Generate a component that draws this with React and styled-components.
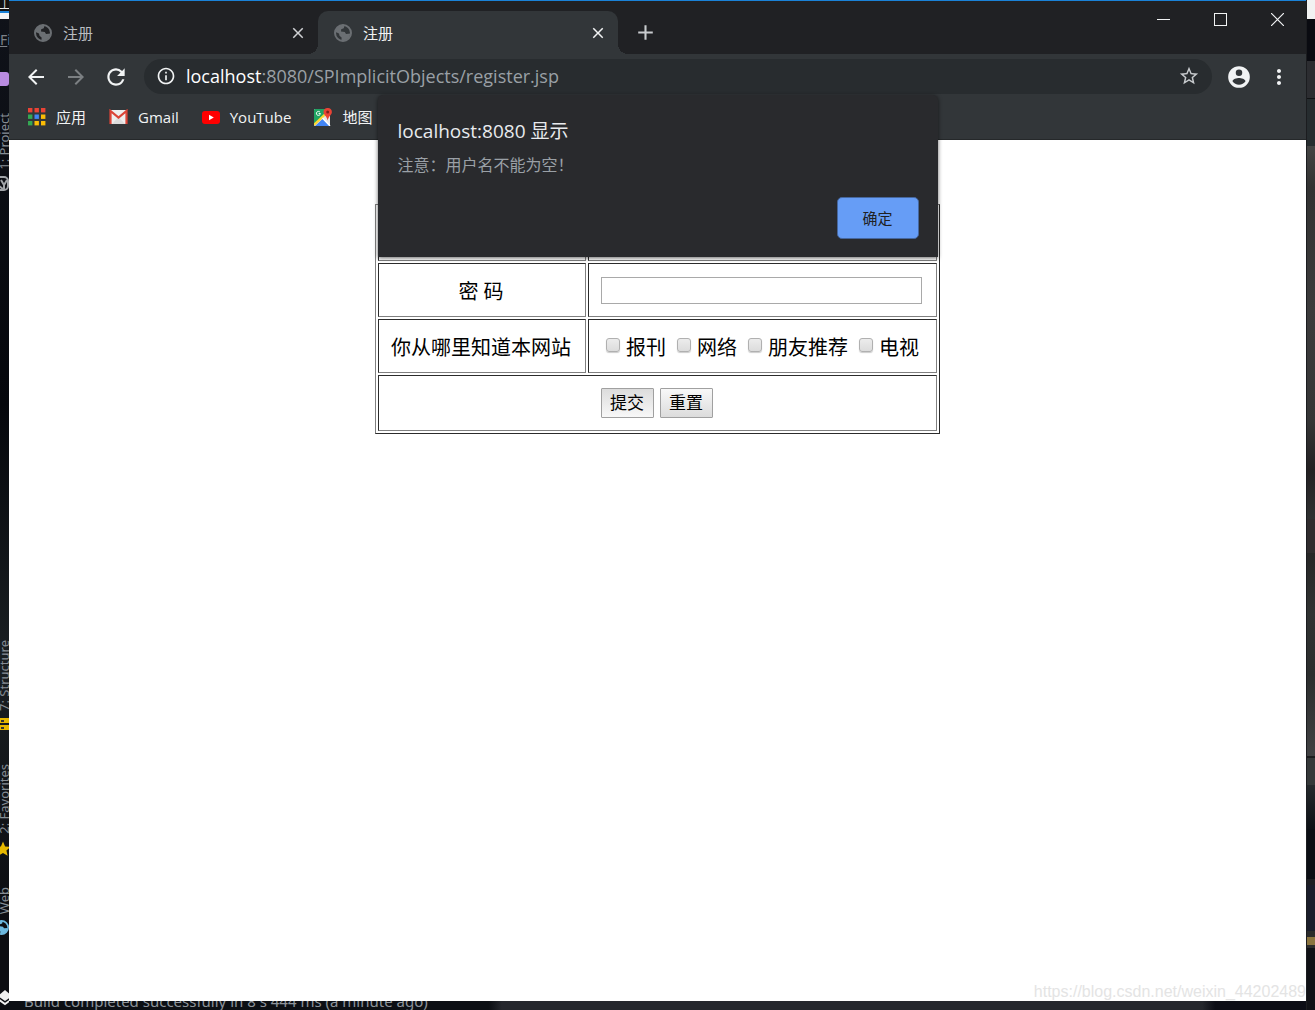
import React from "react";
import styled, { createGlobalStyle } from "styled-components";
import {
  MdAdd,
  MdArrowBack,
  MdArrowForward,
  MdClose,
  MdInfoOutline,
  MdMoreVert,
  MdRefresh,
  MdStar,
  MdStarBorder,
} from "react-icons/md";

const GlobalStyle = createGlobalStyle`
  * {
    box-sizing: border-box;
  }

  body {
    margin: 0;
    background: #0c0e13;
    font-family: "Open Sans", "Noto Sans CJK SC", sans-serif;
  }

  button,
  input {
    font-family: inherit;
  }
`;

const Desktop = styled.div`
  position: relative;
  display: grid;
  grid-template-columns: 9px minmax(0, 1fr) 9px;
  grid-template-rows: minmax(0, 1fr) 9px;
  height: 100vh;
  overflow: hidden;
`;

/* editor window behind the browser */

const Rail = styled.aside`
  grid-row: 1 / 3;
  display: flex;
  flex-direction: column;
  overflow: hidden;
  background: linear-gradient(#10131a, #05070c 40%, #1a1f22 65%, #0c0d12 90%);
  font-family: "Noto Sans", sans-serif;
`;

const RailTop = styled.div`
  flex: none;
  height: 19px;
  background: linear-gradient(
    #111 8px,
    #eee 8px,
    #eee 9px,
    #111 9px,
    #111 11px,
    #1a82d8 11px,
    #1a82d8 13px,
    #f4f4f4 13px
  );
  color: #ddd;
  font-size: 10px;
  line-height: 6px;
  text-align: center;
`;

const RailMenu = styled.div`
  flex: none;
  height: 42px;
  padding-top: 10px;
  color: #7d8288;
  font-size: 14px;
  line-height: 22px;
  white-space: nowrap;

  &::first-letter {
    text-decoration: underline;
  }
`;

const RailFolder = styled.div`
  flex: none;
  height: 14px;
  margin: 11px 0 27px;
  border-radius: 0 3px 3px 0;
  background: #b98be0;
`;

const RailTool = styled.div`
  flex: none;
  display: flex;
  flex-direction: column;
  gap: 6px;
  margin-bottom: ${(props) => props.$after || 0}px;
  color: ${(props) => props.$color};

  span {
    align-self: flex-start;
    writing-mode: vertical-rl;
    transform: rotate(180deg);
    color: #868d95;
    font-size: 13px;
    line-height: 9px;
    white-space: nowrap;
  }

  svg {
    flex: none;
    display: block;
    margin-left: -6px;
  }
`;

const Spacer = styled.div`
  flex: 1;
`;

const RightEdge = styled.aside`
  grid-column: 3;
  grid-row: 1 / 3;
  display: flex;
  flex-direction: column;
  border-left: 1px solid #1b1c1f;
`;

const EdgePart = styled.div`
  flex: ${(props) => props.$size} 0 0;
  background: ${(props) => props.$fill};
`;

const StatusBar = styled.footer`
  grid-column: 2;
  grid-row: 2;
  display: flex;
  align-items: flex-end;
  height: 9px;
  padding: 0 0 2px 15px;
  overflow: hidden;
  background: linear-gradient(
    90deg,
    #0c0f14 37%,
    #25272d 38%,
    #25272d 92%,
    #0c0d15 93%
  );
  color: #8e949b;
  font-family: "Noto Sans", sans-serif;
  font-size: 15px;
  line-height: 14px;
  white-space: nowrap;
`;

/* browser window */

const Browser = styled.div`
  position: relative;
  grid-column: 2;
  grid-row: 1;
  display: flex;
  flex-direction: column;
  border-top: 1px solid #1a82d8;
  background: #fff;
`;

const TitleBar = styled.header`
  display: flex;
  height: 53px;
  padding: 10px 0 0 9px;
  background: #202124;
`;

const Tab = styled.div`
  position: relative;
  display: flex;
  align-items: center;
  width: 300px;
  height: 43px;
  padding: 0 12px 0 16px;
  border-radius: 10px 10px 0 0;
  background: ${(props) => (props.$active ? "#323639" : "transparent")};
  color: ${(props) => (props.$active ? "#f1f3f4" : "#b9bdc1")};
  font-size: 15px;

  &::before,
  &::after {
    content: "";
    display: ${(props) => (props.$active ? "block" : "none")};
    position: absolute;
    bottom: 0;
    width: 10px;
    height: 10px;
  }

  &::before {
    right: 100%;
    background: radial-gradient(circle at 0 0, #202124 10px, #323639 10px);
  }

  &::after {
    left: 100%;
    background: radial-gradient(circle at 100% 0, #202124 10px, #323639 10px);
  }
`;

const TabTitle = styled.span`
  flex: 1;
  padding-left: 11px;
`;

const IconButton = styled.button`
  display: flex;
  align-items: center;
  justify-content: center;
  width: ${(props) => props.$width || 16}px;
  height: ${(props) => props.$height || 16}px;
  padding: 0;
  border: 0;
  background: none;
  color: ${(props) => props.$color || "#f1f3f4"};

  svg {
    flex: none;
  }
`;

const WindowControls = styled.div`
  display: flex;
  margin: -10px 0 0 auto;
`;

const Toolbar = styled.div`
  display: flex;
  align-items: center;
  height: 45px;
  padding: 0 6px 0 7px;
  background: #323639;
`;

const Omnibox = styled.div`
  flex: 1;
  display: flex;
  align-items: center;
  gap: 10px;
  height: 35px;
  margin: 0 8px;
  padding: 0 15px 1px 12px;
  border-radius: 18px;
  background: #282c2f;
  color: #9aa0a6;
  font-size: 18px;
`;

const Address = styled.span`
  flex: 1;

  b {
    color: #fff;
    font-weight: 400;
  }
`;

const Bookmarks = styled.nav`
  display: flex;
  align-items: center;
  gap: 23px;
  height: 41px;
  padding: 0 19px 4px;
  border-bottom: 1px solid #25282a;
  background: #323639;
`;

const Bookmark = styled.a`
  display: flex;
  align-items: center;
  gap: 10px;
  color: #f1f3f4;
  font-size: 15px;
  line-height: 20px;
  text-decoration: none;
`;

const Page = styled.main`
  flex: 1;
  padding-top: 64px;
`;

const FormTable = styled.table`
  margin: 0 auto;
  border: 1px solid;
  border-color: #808080 #2c2c2c #2c2c2c #808080;
  border-spacing: 2px;
  color: #000;
  font-size: 20px;
  line-height: 24px;
`;

const Cell = styled.td`
  height: 54px;
  padding: 12px 14px 12px 12px;
  border: 1px solid;
  border-color: #2c2c2c #808080 #808080 #2c2c2c;
`;

const LabelCell = styled(Cell)`
  padding-top: 16px;
  text-align: center;
`;

const TextInput = styled.input`
  display: block;
  width: 321px;
  height: 27px;
  padding: 1px 4px;
  border: 1px solid #a9a9a9;
  background: #fff;
  font-size: 17px;
`;

const CheckRow = styled.div`
  display: flex;
  gap: 11px;
  padding: 4px 0 0 5px;
`;

const Check = styled.label`
  display: flex;
  align-items: center;
  gap: 6px;

  input {
    appearance: none;
    width: 14px;
    height: 14px;
    margin: 0 0 6px;
    border: 1px solid #b0b0b0;
    border-radius: 3px;
    background: linear-gradient(#ececec, #dcdcdc);
    box-shadow: 0 1px 1px #ccc;
  }
`;

const FormActions = styled.div`
  display: flex;
  justify-content: center;
  gap: 6px;
`;

const FormButton = styled.button`
  width: 53px;
  height: 30px;
  padding: 0;
  border: 1px solid #a0a0a0;
  border-radius: 1px;
  background: ${(props) =>
    props.$pressed
      ? "linear-gradient(#dcdcdc, #f8f8f8)"
      : "linear-gradient(#f8f8f8, #dcdcdc)"};
  color: #000;
  font-size: 17px;
  line-height: 24px;
`;

const Dialog = styled.div`
  position: absolute;
  top: 94px;
  left: 50%;
  display: flex;
  flex-direction: column;
  width: 560px;
  padding: 22px 19px 18px 20px;
  border-radius: 5px 5px 0 0;
  background: #292a2d;
  box-shadow: 0 1px 4px rgba(0, 0, 0, 0.6);
  transform: translateX(-50%);

  h1 {
    margin: 0;
    color: #e8eaed;
    font-size: 19px;
    font-weight: 400;
    line-height: 28px;
  }

  p {
    margin: 8px 0 20px;
    color: #9aa0a6;
    font-size: 16px;
    line-height: 24px;
  }
`;

const ConfirmButton = styled.button`
  align-self: flex-end;
  width: 82px;
  height: 42px;
  padding: 0 0 2px;
  border: 1px solid #46679e;
  border-radius: 5px;
  background: #669df6;
  color: #202124;
  font-size: 15px;
`;

const Watermark = styled.div`
  position: absolute;
  right: 9px;
  bottom: 9px;
  color: #e4e4e4;
  font-family: "Liberation Sans", sans-serif;
  font-size: 16px;
  line-height: 18px;
`;

const Globe = ({ size = 18, color = "#6b6f73" }) => (
  <svg width={size} height={size} viewBox="0 0 18 18">
    <circle cx="9" cy="9" r="8" fill="none" stroke={color} strokeWidth="2" />
    <path
      d="M2 5.5 5.5 1.5 10.5 1 9.8 4.2 7.2 5.2 7 7.5 10.8 8 12 10 16.5 9.5 15 14 10 17 7.5 16.5 7.6 13.4 5.5 11.8 5 9.5 1.5 8Z"
      fill={color}
    />
  </svg>
);

const ProfileIcon = () => (
  <svg width="26" height="26" viewBox="0 0 24 24">
    <path
      d="M12 2a10 10 0 1 0 0 20 10 10 0 0 0 0-20Zm0 3a3 3 0 1 1 0 6 3 3 0 0 1 0-6Zm0 14.2a7.200 7.200 0 0 1-6-3.220c.03-1.990 4-3.080 6-3.080s5.970 1.090 6 3.080a7.200 7.200 0 0 1-6 3.220Z"
      fill="currentColor"
    />
  </svg>
);

const APP_COLORS = [
  ["#ea4335", "#ea4335", "#ea4335"],
  ["#34a853", "#4285f4", "#fbbc05"],
  ["#34a853", "#fbbc05", "#fbbc05"],
];

const AppsIcon = () => (
  <svg width="18" height="18" viewBox="0 0 18 18">
    {APP_COLORS.map((row, y) =>
      row.map((fill, x) => (
        <rect key={`${x}${y}`} x={x * 6.5} y={y * 6.5} width="4.4" height="4.4" fill={fill} />
      ))
    )}
  </svg>
);

const GmailIcon = () => (
  <svg width="19" height="16" viewBox="0 0 19 16">
    <rect x="1" y="1" width="17" height="14" rx="1.5" fill="#eee" />
    <path d="M3 15 9.5 8 16 15Z" fill="#dcdcdc" />
    <path d="M1.500 15V2L9.500 8.500 17.500 2V15" fill="none" stroke="#db4437" strokeWidth="2.2" />
  </svg>
);

const YoutubeIcon = () => (
  <svg width="18" height="13" viewBox="0 0 18 13">
    <rect width="18" height="13" rx="3" fill="#f00" />
    <path d="M7 3.8v5.4l4.8-2.7z" fill="#fff" />
  </svg>
);

const MapsIcon = () => (
  <svg width="18" height="18" viewBox="0 0 18 18">
    <rect y="1" width="16" height="17" rx="1" fill="#e8e8e8" />
    <path d="M0 2a1 1 0 0 1 1-1h10v6L0 17Z" fill="#1fa463" />
    <path d="M1 18 8.500 11l7 7Z" fill="#4285f4" />
    <path d="M0 17 11 6.5" stroke="#fdd835" strokeWidth="2.4" />
    <path d="m8.5 10 7.5 8" stroke="#fff" strokeWidth="1.2" />
    <path d="M6 4.2a2 2 0 1 0 .4 1.4H4.6" fill="none" stroke="#fff" />
    <path d="M13.7 0a4 4 0 0 0-4.200 4c0 3 3.300 4 4.200 8.500.8-4.500 4.200-5.500 4.200-8.500a4 4 0 0 0-4.200-4Z" fill="#ea4335" />
    <circle cx="13.7" cy="4" r="1.5" fill="#7b231e" />
  </svg>
);

const LINKS = [
  { name: "应用", Icon: AppsIcon },
  { name: "Gmail", Icon: GmailIcon },
  { name: "YouTube", Icon: YoutubeIcon },
  { name: "地图", Icon: MapsIcon },
];

const SOURCES = ["报刊", "网络", "朋友推荐", "电视"];

const EDGE = [
  [19, "#f2f2f2"],
  [42, "#0a0b11"],
  [37, "#2c2d31"],
  [1, "#111315"],
  [47, "#262c2f"],
  [274, "linear-gradient(#444, #323232 15%, #3c3b3c 60%, #353536)"],
  [99, "linear-gradient(#353536, #232022 50%, #2f3031)"],
  [34, "#302c2e"],
  [203, "linear-gradient(#262626, #303232 30%, #2b2d2d 60%, #414143)"],
  [2, "#1b1c1d"],
  [27, "#353839"],
  [44, "linear-gradient(#25292c, #0c1015)"],
  [50, "#0b0e14"],
  [6, "#1d1e22"],
  [46, "#1a1d2b"],
  [6, "#2b2b2b"],
  [8, "#8b743f"],
  [3, "#2b2b2b"],
  [62, "#101116"],
];

export default function App() {
  return (
    <Desktop>
      <GlobalStyle />

      <Rail>
        <RailTop>J</RailTop>
        <RailMenu>Fi</RailMenu>
        <RailFolder />
        <RailTool $color="#a0a4a8">
          <span>1: Project</span>
          <svg width="15" height="15" viewBox="0 0 15 15">
            <rect x="1" y="1" width="13" height="13" rx="4" fill="none" stroke="currentColor" strokeWidth="2" />
            <path d="m7 4 3 5 3-5M10 9v4M5 10l4 3" fill="none" stroke="currentColor" strokeWidth="2" />
          </svg>
        </RailTool>
        <Spacer />
        <RailTool $color="#e6b800" $after={33}>
          <span>7: Structure</span>
          <svg width="15" height="14" viewBox="0 0 15 14">
            <path d="M0 1h15v5H0zM0 8h15v5H0z" fill="currentColor" />
            <path d="M7 3h3v2H7zM7 10h3v2H7z" fill="#333" />
          </svg>
        </RailTool>
        <RailTool $color="#e6b800" $after={29}>
          <span>2: Favorites</span>
          <MdStar size={18} />
        </RailTool>
        <RailTool $color="#6cb8df" $after={55}>
          <span>Web</span>
          <Globe size={15} color="#6cb8df" />
        </RailTool>
        <RailTool $color="#f0f0f0" $after={4}>
          <svg width="20" height="16" viewBox="0 0 20 16">
            <path d="m11 0 7 6-7 5-7-5Z" fill="currentColor" />
            <path d="m4 9 7 5 7-5" fill="none" stroke="currentColor" strokeWidth="2" />
          </svg>
        </RailTool>
      </Rail>

      <Browser>
        <TitleBar>
          <Tab>
            <Globe />
            <TabTitle>注册</TabTitle>
            <IconButton $color="#d0d2d5" aria-label="关闭标签页">
              <MdClose size={18} />
            </IconButton>
          </Tab>
          <Tab $active>
            <Globe />
            <TabTitle>注册</TabTitle>
            <IconButton aria-label="关闭标签页">
              <MdClose size={18} />
            </IconButton>
          </Tab>
          <IconButton $width={54} $height={43} $color="#c8cbce" aria-label="新标签页">
            <MdAdd size={25} />
          </IconButton>
          <WindowControls>
            <IconButton $width={57} $height={37} aria-label="最小化">
              <svg width="13" height="13" viewBox="0 0 13 13">
                <path d="M0 6.5h13" stroke="currentColor" />
              </svg>
            </IconButton>
            <IconButton $width={57} $height={37} aria-label="最大化">
              <svg width="13" height="13" viewBox="0 0 13 13">
                <rect x=".5" y=".5" width="12" height="12" fill="none" stroke="currentColor" />
              </svg>
            </IconButton>
            <IconButton $width={57} $height={37} aria-label="关闭">
              <svg width="13" height="13" viewBox="0 0 13 13">
                <path d="m0 0 13 13M13 0 0 13" stroke="currentColor" strokeWidth="1.2" />
              </svg>
            </IconButton>
          </WindowControls>
        </TitleBar>

        <Toolbar>
          <IconButton $width={40} $height={36} aria-label="后退">
            <MdArrowBack size={24} />
          </IconButton>
          <IconButton $width={40} $height={36} $color="#7c8083" aria-label="前进">
            <MdArrowForward size={24} />
          </IconButton>
          <IconButton $width={40} $height={36} aria-label="重新加载">
            <MdRefresh size={26} />
          </IconButton>
          <Omnibox>
            <MdInfoOutline size={20} color="#f1f3f4" />
            <Address>
              <b>localhost</b>:8080/SPImplicitObjects/register.jsp
            </Address>
            <IconButton $color="#c8cbce" aria-label="收藏">
              <MdStarBorder size={22} />
            </IconButton>
          </Omnibox>
          <IconButton $width={38} $height={36} aria-label="用户">
            <ProfileIcon />
          </IconButton>
          <IconButton $width={42} $height={36} aria-label="菜单">
            <MdMoreVert size={24} />
          </IconButton>
        </Toolbar>

        <Bookmarks>
          {LINKS.map(({ name, Icon }) => (
            <Bookmark key={name} href="#">
              <Icon />
              {name}
            </Bookmark>
          ))}
        </Bookmarks>

        <Page>
          <form onSubmit={(e) => e.preventDefault()}>
            <FormTable>
              <tbody>
                <tr>
                  <LabelCell />
                  <Cell>
                    <TextInput aria-label="用户名" />
                  </Cell>
                </tr>
                <tr>
                  <LabelCell>
                    <label htmlFor="password">密 码</label>
                  </LabelCell>
                  <Cell>
                    <TextInput id="password" type="password" />
                  </Cell>
                </tr>
                <tr>
                  <LabelCell>你从哪里知道本网站</LabelCell>
                  <Cell>
                    <CheckRow>
                      {SOURCES.map((source) => (
                        <Check key={source}>
                          <input type="checkbox" />
                          {source}
                        </Check>
                      ))}
                    </CheckRow>
                  </Cell>
                </tr>
                <tr>
                  <Cell colSpan={2}>
                    <FormActions>
                      <FormButton $pressed>提交</FormButton>
                      <FormButton type="reset">重置</FormButton>
                    </FormActions>
                  </Cell>
                </tr>
              </tbody>
            </FormTable>
          </form>
        </Page>

        <Dialog role="alertdialog" aria-labelledby="dialog-title">
          <h1 id="dialog-title">localhost:8080 显示</h1>
          <p>注意：用户名不能为空！</p>
          <ConfirmButton>确定</ConfirmButton>
        </Dialog>
      </Browser>

      <StatusBar>Build completed successfully in 8 s 444 ms (a minute ago)</StatusBar>

      <RightEdge>
        {EDGE.map(([size, fill], i) => (
          <EdgePart key={i} $size={size} $fill={fill} />
        ))}
      </RightEdge>

      <Watermark>https://blog.csdn.net/weixin_44202489</Watermark>
    </Desktop>
  );
}
